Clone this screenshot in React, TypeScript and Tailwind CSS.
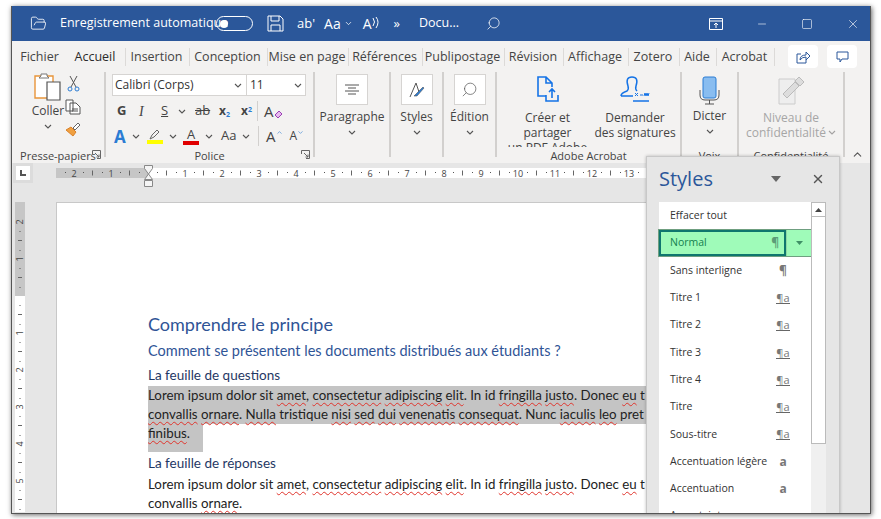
import { ChevronDown, ChevronUp, FolderOpen, Minus, Search, Square, X } from 'lucide-react'
import type { ReactNode } from 'react'

const tabs = [
  { label: 'Fichier', w: 55 },
  { label: 'Accueil', w: 59, active: true },
  { label: 'Insertion', w: 64 },
  { label: 'Conception', w: 78 },
  { label: 'Mise en page', w: 81 },
  { label: 'Références', w: 74 },
  { label: 'Publipostage', w: 82 },
  { label: 'Révision', w: 59 },
  { label: 'Affichage', w: 65 },
  { label: 'Zotero', w: 51 },
  { label: 'Aide', w: 37 },
  { label: 'Acrobat', w: 58 },
]

const styleRows = [
  { name: 'Sans interligne', mark: '¶' },
  { name: 'Titre 1', mark: 'link' },
  { name: 'Titre 2', mark: 'link' },
  { name: 'Titre 3', mark: 'link' },
  { name: 'Titre 4', mark: 'link' },
  { name: 'Titre', mark: 'link' },
  { name: 'Sous-titre', mark: 'link' },
  { name: 'Accentuation légère', mark: 'a' },
  { name: 'Accentuation', mark: 'a' },
  { name: 'Accent. intense', mark: 'a' },
]

function Chev({ className = '' }: { className?: string }) {
  return (
    <svg width="8" height="5" viewBox="0 0 8 5" className={`shrink-0 ${className}`}>
      <path d="M1 1l3 3 3-3" fill="none" stroke="#555" strokeWidth="1.1" />
    </svg>
  )
}

function Launcher() {
  return (
    <svg width="9" height="9" viewBox="0 0 9 9" className="shrink-0">
      <path d="M.5 4V.5h8v8H5M3 3l4 4M7 4.5V7H4.5" fill="none" stroke="#666" />
    </svg>
  )
}

function Sep({ h = 'h-[85px]' }: { h?: string }) {
  return <div className={`w-0.5 shrink-0 bg-[#d2d0ce] ${h}`} />
}

function BigBox({ children }: { children: ReactNode }) {
  return (
    <div className="flex h-[31px] w-[32px] items-center justify-center border border-[#d6d4d2] bg-white">
      {children}
    </div>
  )
}

function Group({ w, label, launcher, children }: { w: number; label: string; launcher?: boolean; children: ReactNode }) {
  return (
    <div className="flex h-[91px] shrink-0 flex-col" style={{ width: w }}>
      <div className="h-[75px] overflow-hidden">{children}</div>
      <div className="flex h-[16px] items-center justify-center text-[11px] leading-none text-[#444] relative">
        {label}
        {launcher && (
          <span className="absolute right-[3px] top-[3px]">
            <Launcher />
          </span>
        )}
      </div>
    </div>
  )
}

function BoxGroup({ label, w, children }: { label: string; w: number; children: ReactNode }) {
  return (
    <div className="flex h-[91px] shrink-0 flex-col items-center pt-[2px]" style={{ width: w }}>
      <BigBox>{children}</BigBox>
      <span className="mt-[3px] text-[12px] leading-[17px] text-[#444]">{label}</span>
      <Chev className="mt-[5px]" />
    </div>
  )
}

function Ruler() {
  const marks = []
  for (let i = -3; i < 14; i++) {
    const x = 92 + i * 37
    if (i !== 0) {
      marks.push(
        <text key={`n${i}`} x={x} y={9} fontSize="9" textAnchor="middle" fill="#444" fontFamily="Open Sans, sans-serif">
          {Math.abs(i)}
        </text>,
      )
    }
    marks.push(<rect key={`a${i}`} x={x + 9} y={4} width={1} height={1} fill="#555" />)
    marks.push(<rect key={`b${i}`} x={x + 18} y={2.5} width={1} height={5} fill="#666" />)
    marks.push(<rect key={`c${i}`} x={x + 28} y={4} width={1} height={1} fill="#555" />)
  }
  return (
    <svg width="591" height="10" viewBox="0 0 591 10" className="shrink-0">
      <rect width="92" height="10" fill="#c6c6c6" />
      <rect x="92" width="499" height="10" fill="#fff" />
      {marks}
    </svg>
  )
}

function VRuler() {
  const marks = []
  for (let i = -2; i < 6; i++) {
    const y = 94 + i * 37
    if (i !== 0) {
      marks.push(
        <text
          key={`n${i}`}
          x={5}
          y={y + 3}
          fontSize="9"
          textAnchor="middle"
          fill="#444"
          fontFamily="Open Sans, sans-serif"
          transform={`rotate(-90 5 ${y})`}
        >
          {Math.abs(i)}
        </text>,
      )
    }
    marks.push(<rect key={`a${i}`} x={4.5} y={y + 9} width={1} height={1} fill="#555" />)
    marks.push(<rect key={`b${i}`} x={3} y={y + 18} width={4} height={1} fill="#666" />)
    marks.push(<rect key={`c${i}`} x={4.5} y={y + 28} width={1} height={1} fill="#555" />)
  }
  return (
    <svg width="10" height="310" viewBox="0 0 10 310" className="shrink-0">
      <rect width="10" height="94" fill="#c6c6c6" />
      <rect y="94" width="10" height="216" fill="#fff" />
      {marks}
    </svg>
  )
}

function Wavy({ children }: { children: ReactNode }) {
  return <span className="underline decoration-[#e0342c] decoration-wavy decoration-[1px] underline-offset-[2px]">{children}</span>
}

function BodyLine1() {
  return (
    <>
      Lorem ipsum dolor sit <Wavy>amet</Wavy>, <Wavy>consectetur</Wavy> <Wavy>adipiscing</Wavy> <Wavy>elit</Wavy>. In id{' '}
      <Wavy>fringilla</Wavy> <Wavy>justo</Wavy>. Donec <Wavy>eu</Wavy> t
    </>
  )
}

function LinkMark() {
  return <span className="border-b border-[#666] text-[11px] leading-[11px] text-[#777]">¶a</span>
}

export default function App() {
  return (
    <div className="h-[519px] w-[881px] overflow-hidden bg-white pl-[11px] pt-[6px] font-['Open_Sans',sans-serif]">
      <div className="relative flex h-[508px] w-[860px] flex-col overflow-hidden border-x border-b border-[#555] shadow-[1px_1px_5px_rgba(0,0,0,0.6)]">
        {/* barre de titre */}
        <div className="flex h-[35px] shrink-0 items-center bg-[#2b579a] text-white">
          <FolderOpen size={17} strokeWidth={1.2} className="ml-[18px]" />
          <span className="ml-[13px] w-[150px] whitespace-nowrap text-[12.5px]">Enregistrement automatique</span>
          <div className="ml-[6px] flex h-[15px] w-[37px] items-center rounded-full border border-white pl-[3px]">
            <div className="h-[8px] w-[8px] rounded-full bg-white" />
          </div>
          <svg width="17" height="17" viewBox="0 0 17 17" className="ml-[14px]">
            <path d="M1 1h12l3 3v12H1zM4 1v5h8V1M4 16v-6h9v6" fill="none" stroke="#fff" strokeWidth="1" />
          </svg>
          <span className="ml-[13px] text-[13px] leading-none">ab'</span>
          <span className="ml-[9px] text-[14px] leading-none">Aa</span>
          <ChevronDown size={9} className="ml-[3px]" />
          <span className="ml-[10px] flex items-start text-[14px] leading-none">
            A
            <svg width="8" height="13" viewBox="0 0 8 13" className="-mt-[1px]">
              <path d="M1 2q3 4 0 8M4 1q4 5 0 11" fill="none" stroke="#fff" />
            </svg>
          </span>
          <span className="ml-[14px] text-[13px] leading-none">»</span>
          <span className="ml-[19px] text-[12.5px]">Docu...</span>
          <Search size={15} strokeWidth={1.2} className="ml-[27px] -scale-x-100" />
          <svg width="14" height="12" viewBox="0 0 14 12" className="ml-[208px]">
            <path d="M.5.5h13v11H.5zM.5 3h13M7 10V5M5 7l2-2 2 2" fill="none" stroke="#fff" />
          </svg>
          <Minus size={12} strokeWidth={1.2} className="ml-[33px]" />
          <Square size={12} strokeWidth={1.2} className="ml-[33px]" />
          <X size={14} strokeWidth={1.1} className="ml-[33px]" />
        </div>

        {/* onglets */}
        <div className="flex h-[31px] shrink-0 items-center bg-[#f3f2f1] text-[12.5px] text-[#444]">
          {tabs.map((t, i) => (
            <div key={t.label} className="flex h-[18px] shrink-0 items-center" style={{ width: t.w }}>
              <div
                className={`relative h-[18px] min-w-0 flex-1 overflow-hidden whitespace-nowrap text-center leading-[18px] ${
                  t.active ? 'font-medium text-[#2b2b2b]' : ''
                }`}
              >
                {t.label}
              </div>
              {i > 0 && <div className="ml-[2px] h-[18px] w-px shrink-0 bg-[#dcdad8]" />}
            </div>
          ))}
          <div className="ml-[13px] flex h-[23px] w-[30px] items-center justify-center rounded-sm bg-white">
            <svg width="15" height="14" viewBox="0 0 15 14">
              <path d="M5 4H1v9h9v-3M4 10q0-5 6-5V2l4 4-4 4V7q-4 0-6 3z" fill="none" stroke="#2b579a" />
            </svg>
          </div>
          <div className="ml-[9px] flex h-[23px] w-[30px] items-center justify-center rounded-sm bg-white">
            <svg width="13" height="12" viewBox="0 0 13 12">
              <path d="M1 1h11v7H6l-2 3V8H1z" fill="none" stroke="#2b579a" />
            </svg>
          </div>
        </div>

        {/* ruban */}
        <div className="flex h-[91px] shrink-0 bg-[#f3f2f1] text-[#444]">
          <Group w={92} label="Presse-papiers" launcher>
            <div className="flex pl-[20px]">
              <div className="flex w-[32px] flex-col items-center">
                <svg width="28" height="30" viewBox="0 0 28 30">
                  <path d="M1 4h18v22H1z" fill="#fff" stroke="#e8953a" strokeWidth="1.4" />
                  <path d="M7 4V2h6v2l2 2H5z" fill="#fff" stroke="#777" />
                  <path d="M13 10h13v18H13z" fill="#fff" stroke="#555" strokeWidth="1.2" />
                </svg>
                <span className="text-[12px] leading-[17px]">Coller</span>
                <Chev className="mt-[5px]" />
              </div>
              <div className="ml-[1px] flex flex-col items-center gap-[7px] pt-[3px]">
                <svg width="13" height="17" viewBox="0 0 13 17">
                  <path d="M3 1l6 11M10 1L4 12" stroke="#555" fill="none" />
                  <circle cx="3" cy="14" r="2" fill="none" stroke="#2b7cd3" />
                  <circle cx="10" cy="14" r="2" fill="none" stroke="#2b7cd3" />
                </svg>
                <svg width="16" height="16" viewBox="0 0 16 16">
                  <path d="M1 1h7v11H1zM5 4h6l4 4v7H5z" fill="#fff" stroke="#555" />
                  <path d="M7 10h6M7 12h6" stroke="#555" />
                </svg>
                <svg width="16" height="15" viewBox="0 0 16 15">
                  <path d="M1 8l5-3 5 5-3 4z" fill="#f0a040" stroke="#d9822b" />
                  <path d="M8 6l5-5 2 2-5 5z" fill="#fff" stroke="#666" />
                </svg>
              </div>
            </div>
          </Group>
          <Sep />
          <Group w={207} label="Police" launcher>
            <div className="pl-[6px] pt-[2px]">
              <div className="flex h-[22px] w-[194px] border border-[#d6d4d2] bg-white text-[12px] text-[#333]">
                <div className="flex w-[134px] items-center justify-between border-r border-[#d6d4d2] pl-[2px] pr-[4px]">
                  Calibri (Corps)
                  <Chev />
                </div>
                <div className="flex flex-1 items-center justify-between pl-[3px] pr-[3px]">
                  11
                  <Chev />
                </div>
              </div>
              <div className="mt-[3px] flex h-[24px] items-center pl-[5px] text-[#444]">
                <span className="w-[22px] text-[13px] font-bold">G</span>
                <span className="w-[22px] font-['Liberation_Serif',serif] text-[14px] italic">I</span>
                <span className="w-[17px] text-[13px] underline">S</span>
                <Chev className="mr-[9px]" />
                <span className="w-[24px] text-[13px] line-through">ab</span>
                <span className="w-[22px] text-[12px] font-bold">
                  x<sub className="text-[7px] text-[#2b7cd3]">2</sub>
                </span>
                <span className="w-[16px] text-[12px] font-bold">
                  x<sup className="text-[7px] text-[#2b7cd3]">2</sup>
                </span>
                <div className="mr-[6px] h-[20px] w-px bg-[#d2d0ce]" />
                <span className="text-[15px] leading-none">A</span>
                <svg width="9" height="9" viewBox="0 0 9 9" className="mt-[7px]">
                  <path d="M1 5l4-4 3 3-4 4z" fill="#e7b8ef" stroke="#9b3fb5" />
                </svg>
              </div>
              <div className="mt-[1px] flex h-[24px] items-center pl-[2px]">
                <span className="w-[16px] text-[17px] font-bold leading-none text-[#2b7cd3]">A</span>
                <Chev className="mr-[7px] ml-[2px]" />
                <div className="flex w-[16px] flex-col items-center">
                  <svg width="12" height="11" viewBox="0 0 12 11">
                    <path d="M1 10l2-4 5-5 2 2-5 5z" fill="none" stroke="#666" />
                  </svg>
                  <div className="h-[4px] w-[16px] bg-[#ffff00]" />
                </div>
                <Chev className="mx-[6px]" />
                <div className="flex w-[16px] flex-col items-center">
                  <span className="text-[13px] leading-[12px]">A</span>
                  <div className="mt-[1px] h-[4px] w-[16px] bg-[#e00000]" />
                </div>
                <Chev className="mx-[6px]" />
                <span className="ml-[2px] w-[21px] text-[13px]">Aa</span>
                <Chev className="mr-[8px]" />
                <div className="mr-[7px] h-[20px] w-px bg-[#d2d0ce]" />
                <span className="text-[15px] leading-none">A</span>
                <ChevronUp size={7} className="mb-[8px] mr-[7px] text-[#2b7cd3]" />
                <span className="text-[12px] leading-none">A</span>
                <ChevronDown size={7} className="mb-[8px] text-[#2b7cd3]" />
              </div>
            </div>
          </Group>
          <Sep />
          <BoxGroup label="Paragraphe" w={74}>
            <svg width="14" height="14" viewBox="0 0 14 14">
              <path d="M0 2h14M3 5h8M0 8h14M3 11h8" stroke="#555" />
            </svg>
          </BoxGroup>
          <Sep />
          <BoxGroup label="Styles" w={51}>
            <svg width="16" height="16" viewBox="0 0 16 16">
              <path d="M1 15L7 1l3 9" fill="none" stroke="#555" />
              <path d="M5 14l9-9 1 1-7 8z" fill="#2b7cd3" stroke="#555" strokeWidth=".6" />
            </svg>
          </BoxGroup>
          <Sep />
          <BoxGroup label="Édition" w={51}>
            <Search size={17} strokeWidth={1} className="-scale-x-100 text-[#555]" />
          </BoxGroup>
          <Sep />
          <Group w={183} label="Adobe Acrobat">
            <div className="flex justify-center text-center text-[12px] leading-[15px]">
              <div className="flex w-[93px] flex-col items-center">
                <svg width="24" height="27" viewBox="0 0 24 27" className="mt-[4px]">
                  <path d="M10 20H2V1h8l6 6v4M10 1v6h6M10 19v6h12v-6M16 22v-9M13 16l3-3 3 3" fill="none" stroke="#1473e6" strokeWidth="1.6" />
                </svg>
                <div className="mt-[7px]">
                  Créer et partager
                  <br />
                  un PDF Adobe
                </div>
              </div>
              <div className="flex w-[82px] flex-col items-center">
                <svg width="32" height="28" viewBox="0 0 32 28" className="mt-[3px]">
                  <path d="M2 21q0-3 6-5 2-2 1-5-3-9 4-9t4 9q-1 3 1 5M2 21h12M14 26h16" fill="none" stroke="#1473e6" strokeWidth="1.5" />
                  <path d="M16 18l3 3m0-3l-3 3M21 20h3M25 21l1-3 1 3 1-3 1 3 1-3" fill="none" stroke="#1473e6" />
                </svg>
                <div className="mt-[7px]">
                  Demander
                  <br />
                  des signatures
                </div>
              </div>
            </div>
          </Group>
          <Sep />
          <Group w={55} label="Voix">
            <div className="flex flex-col items-center pt-[4px] text-[12px]">
              <svg width="21" height="29" viewBox="0 0 21 29">
                <rect x="4" y="1" width="13" height="21" rx="2" fill="#89bdf0" stroke="#2b7cd3" />
                <path d="M1 14v5q0 5 5 5h9q5 0 5-5v-5M10.500 24v4M6 28h9" fill="none" stroke="#555" />
              </svg>
              <span className="mt-[2px] leading-[17px]">Dicter</span>
              <Chev className="mt-[5px]" />
            </div>
          </Group>
          <Sep />
          <Group w={104} label="Confidentialité">
            <div className="flex flex-col items-center pt-[4px] text-center text-[12px] leading-[15px] text-[#a6a6a6]">
              <svg width="28" height="29" viewBox="0 0 28 29">
                <path d="M2 3h16v25H2z" fill="#eee" stroke="#ccc" />
                <path d="M6 18L18 6l4 4-12 12zM18 5l4-4 5 5-4 4z" fill="#ddd" stroke="#bbb" />
              </svg>
              <div className="mt-[5px]">
                Niveau de
                <br />
                <span className="inline-flex items-center gap-[2px]">
                  confidentialité <Chev className="opacity-50" />
                </span>
              </div>
            </div>
          </Group>
          <Sep />
          <div className="flex flex-1 items-end justify-center pb-[2px]">
            <ChevronUp size={13} className="text-[#555]" />
          </div>
        </div>

        {/* zone document */}
        <div className="min-h-0 flex-1 overflow-hidden bg-[#e6e6e6]">
          <div className="flex h-[20px] items-center">
            <div className="ml-[1px] flex h-[20px] w-[20px] items-center justify-center bg-[#dcdcdc]">
              <div className="flex h-[14px] w-[14px] items-center justify-center bg-white">
                <div className="h-[6px] w-[6px] border-b-2 border-l-2 border-[#555]" />
              </div>
            </div>
            <div className="relative ml-[23px]">
              <Ruler />
              <svg width="9" height="23" viewBox="0 0 9 23" className="absolute left-[88px] top-[-3px]">
                <path d="M.5.5h8v3L4.500 9 .5 3.500zM4.500 9l4 5.500H.5zM.5 15.500h8v6h-8z" fill="#f5f5f5" stroke="#888" />
              </svg>
            </div>
          </div>
          <div className="flex pt-[19px]">
            <div className="ml-[3px] shrink-0">
              <VRuler />
            </div>
            <div className="ml-[31px] w-[760px] shrink-0 border-l border-t border-[#c8c8c8] bg-white pl-[91px] pt-[108px] font-['Lato',sans-serif] text-[13.3px] text-[#222]">
              <div className="text-[18px] leading-[26px] text-[#2f5496]">Comprendre le principe</div>
              <div className="mt-[2px] text-[14.500px] leading-[24px] text-[#2f5496]">
                Comment se présentent les documents distribués aux étudiants ?
              </div>
              <div className="mt-[1px] text-[13.500px] leading-[22px] text-[#1f3864]">La feuille de questions</div>
              <div className="h-[38px] whitespace-nowrap bg-[#c4c4c4] leading-[19px]">
                <div>
                  <BodyLine1 />
                </div>
                <div>
                  <Wavy>convallis</Wavy> <Wavy>ornare</Wavy>. <Wavy>Nulla</Wavy> tristique <Wavy>nisi</Wavy> <Wavy>sed</Wavy>{' '}
                  <Wavy>dui</Wavy> <Wavy>venenatis</Wavy> <Wavy>consequat</Wavy>. Nunc <Wavy>iaculis</Wavy> <Wavy>leo</Wavy> pret
                </div>
              </div>
              <div className="h-[28px] w-[55px] bg-[#c4c4c4] leading-[19px]">
                <Wavy>finibus</Wavy>.
              </div>
              <div className="text-[13.500px] leading-[23px] text-[#1f3864]">La feuille de réponses</div>
              <div className="leading-[19px]">
                <BodyLine1 />
              </div>
              <div className="leading-[19px]">
                convallis <Wavy>ornare</Wavy>.
              </div>
            </div>
          </div>
        </div>

        {/* volet Styles */}
        <div className="absolute left-[634px] top-[150px] flex h-[358px] w-[194px] flex-col border-l border-r border-t border-[#c8c8c8] bg-[#e6e6e6] pl-[12px] shadow-[0_0_3px_rgba(0,0,0,0.25)]">
          <div className="flex h-[45px] shrink-0 items-center pb-[2px] pr-[14px]">
            <span className="flex-1 text-[20px] text-[#2b579a]">Styles</span>
            <svg width="10" height="6" viewBox="0 0 10 6" className="mr-[30px]">
              <path d="M0 0h10L5 6z" fill="#666" />
            </svg>
            <X size={14} strokeWidth={2.4} className="text-[#555]" />
          </div>
          <div className="flex min-h-0 w-[167px] flex-1">
            <div className="w-[152px] shrink-0 bg-white pt-[0px] text-[10.500px] text-[#333]">
              <div className="flex h-[27px] items-center pl-[11px]">Effacer tout</div>
              <div className="-ml-[1px] flex h-[28px] w-[154px] border border-[#6f9f80] bg-[#9ffbb9]">
                <div className="flex w-[127px] items-center justify-between border-2 border-[#0f766e] pl-[9px] pr-[5px] text-[#14804f]">
                  Normal
                  <span className="text-[12px] font-bold text-[#5c9c78]">¶</span>
                </div>
                <div className="flex flex-1 items-center justify-center border-l border-[#8fd9a5]">
                  <svg width="7" height="4" viewBox="0 0 7 4">
                    <path d="M0 0h7L3.500 4z" fill="#3f8f66" />
                  </svg>
                </div>
              </div>
              {styleRows.map(r => (
                <div key={r.name} className="flex h-[27.300px] items-center whitespace-nowrap pl-[11px]">
                  <span className="w-[103px]">{r.name}</span>
                  <span className="flex w-[20px] justify-center">
                    {r.mark === 'link' ? <LinkMark /> : <span className="text-[12px] font-bold text-[#777]">{r.mark}</span>}
                  </span>
                </div>
              ))}
            </div>
            <div className="w-[15px] shrink-0 bg-[#f0f0f0]">
              <div className="h-[242px] border border-[#bbb] bg-white">
                <div className="flex h-[14px] items-center justify-center border-b border-[#bbb]">
                  <svg width="7" height="4" viewBox="0 0 7 4">
                    <path d="M3.500 0L7 4H0z" fill="#444" />
                  </svg>
                </div>
              </div>
            </div>
          </div>
        </div>
      </div>
    </div>
  )
}
